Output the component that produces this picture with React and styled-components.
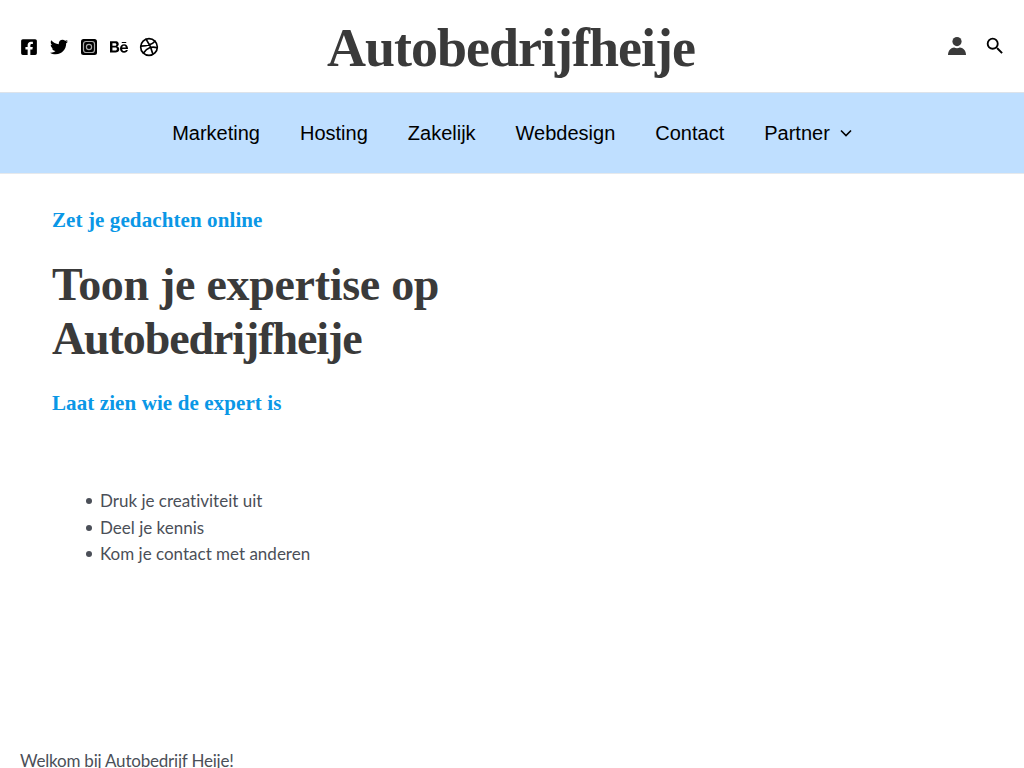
import React from "react"
import styled, { createGlobalStyle } from "styled-components"
import { FaFacebookSquare, FaTwitter, FaBehance } from "react-icons/fa"
import { FiDribbble } from "react-icons/fi"
import { MdSearch } from "react-icons/md"

const GlobalStyle = createGlobalStyle`
  html, body {
    margin: 0;
    padding: 0;
    background: #fff;
    height: 768px;
    overflow: hidden;
    font-family: "Lato", "Open Sans", sans-serif;
    font-variant-ligatures: none;
  }
`

const Page = styled.div`
  width: 1024px;
  height: 768px;
  overflow: hidden;
`

const TopBar = styled.header`
  height: 92px;
  border-bottom: 1px solid #dde3ea;
  display: grid;
  grid-template-columns: 1fr auto 1fr;
  align-items: center;
  padding: 0 20px;
`

const Socials = styled.div`
  display: flex;
  align-items: center;
  gap: 12px;
  color: #000;
  padding-top: 2px;
`

const SiteTitle = styled.h1`
  margin: 4px 0 0;
  padding-right: 2px;
  font-family: "Liberation Serif", serif;
  font-weight: 700;
  font-size: 54px;
  letter-spacing: -1px;
  line-height: 88px;
  color: #3a3a3a;
`

const Tools = styled.div`
  display: flex;
  justify-content: flex-end;
  align-items: center;
  gap: 18px;
  margin-right: -2px;
  color: #3a3a3a;
`

const SearchTool = styled.span`
  display: flex;
  color: #000;
`

const IconSvg = styled.svg`
  display: block;
`

const DribbbleIcon = styled(FiDribbble)`
  margin: 0 -1px;
`

const NavBar = styled.nav`
  height: 80px;
  border-bottom: 1px solid #e6e9ec;
  background: #bfdfff;
  display: flex;
  align-items: center;
  justify-content: center;
  gap: 40px;
`

const NavLink = styled.a`
  display: flex;
  align-items: center;
  gap: 10px;
  font-family: "Liberation Sans", Arial, sans-serif;
  font-size: 20px;
  color: #000;
  text-decoration: none;
`

const Main = styled.main`
  height: 576px;
  box-sizing: border-box;
  padding: 32px 52px 0;
`

const Tagline = styled.h4`
  margin: 0;
  font-family: "Liberation Serif", serif;
  font-weight: 700;
  font-size: 21px;
  letter-spacing: 0.1px;
  line-height: 28px;
  color: #0a97e6;
`

const Headline = styled.h2`
  margin: 24px 0 0;
  width: 480px;
  font-family: "Liberation Serif", serif;
  font-weight: 700;
  font-size: 46px;
  letter-spacing: -0.3px;
  line-height: 54px;
  color: #3a3a3a;
`

const HeadlineBrand = styled.span`
  letter-spacing: -1.1px;
`

const SubLine = styled(Tagline)`
  margin-top: 23px;
`

const Bullets = styled.ul`
  margin: 71px 0 0;
  padding: 0 0 0 34px;
  list-style: none;
  font-size: 17px;
  line-height: 26.6px;
  color: #4b4f58;
`

const Bullet = styled.li`
  display: flex;
  align-items: center;
  gap: 8px;

  &::before {
    content: "";
    width: 6px;
    height: 6px;
    border-radius: 50%;
    background: #4b4f58;
  }
`

const Welcome = styled.p`
  margin: 0;
  padding: 0 20px;
  font-size: 17px;
  line-height: 22px;
  letter-spacing: -0.2px;
  color: #4b4f58;
`

const Chevron = () => (
  <IconSvg width="12" height="8" viewBox="0 0 12 8" fill="none" stroke="#000" strokeWidth="1.6">
    <path d="M1 1.5l5 5 5-5" />
  </IconSvg>
)

const InstaIcon = () => (
  <IconSvg width="18" height="18" viewBox="0 0 18 18">
    <rect x="1" y="1" width="16" height="16" rx="2.5" fill="#000" />
    <rect x="3.500" y="3.500" width="11" height="11" rx="2.500" fill="none" stroke="#aaa" strokeWidth="1.2" />
    <circle cx="9" cy="9" r="2.600" fill="none" stroke="#aaa" strokeWidth="1.2" />
  </IconSvg>
)

const PersonIcon = () => (
  <IconSvg width="18" height="18" viewBox="0 0 18 18" fill="currentColor">
    <circle cx="9" cy="4.600" r="4.600" />
    <path d="M0 18c0-1 .2-3 1.200-4.600C2.400 11.600 4.600 10.400 6.200 10.400c1.600 1 4 1 5.600 0 1.600 0 3.800 1.200 5 3 1 1.600 1.200 3.600 1.200 4.600z" />
  </IconSvg>
)

const navItems = ["Marketing", "Hosting", "Zakelijk", "Webdesign", "Contact"]

export default function App() {
  return (
    <Page>
      <GlobalStyle />
      <TopBar>
        <Socials>
          <FaFacebookSquare size={18} />
          <FaTwitter size={18} />
          <InstaIcon />
          <FaBehance size={18} />
          <DribbbleIcon size={20} />
        </Socials>
        <SiteTitle>Autobedrijfheije</SiteTitle>
        <Tools>
          <PersonIcon />
          <SearchTool>
            <MdSearch size={22} />
          </SearchTool>
        </Tools>
      </TopBar>
      <NavBar>
        {navItems.map((item) => (
          <NavLink key={item}>{item}</NavLink>
        ))}
        <NavLink>
          Partner <Chevron />
        </NavLink>
      </NavBar>
      <Main>
        <Tagline>Zet je gedachten online</Tagline>
        <Headline>
          Toon je expertise op <HeadlineBrand>Autobedrijfheije</HeadlineBrand>
        </Headline>
        <SubLine>Laat zien wie de expert is</SubLine>
        <Bullets>
          <Bullet>Druk je creativiteit uit</Bullet>
          <Bullet>Deel je kennis</Bullet>
          <Bullet>Kom je contact met anderen</Bullet>
        </Bullets>
      </Main>
      <Welcome>Welkom bij Autobedrijf Heije!</Welcome>
    </Page>
  )
}
